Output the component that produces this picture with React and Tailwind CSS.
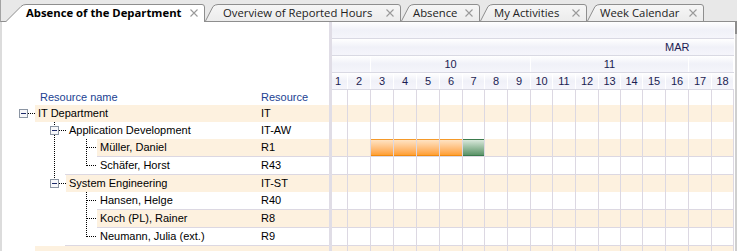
import React from "react";

// day column widths in the chart (px, right border included)
const DAYS = [16, 23, 23, 23, 23, 23, 22, 23, 23, 22, 23, 23, 22, 22, 23, 23, 23, 22];
const W = { 16: "w-[16px]", 22: "w-[22px]", 23: "w-[23px]" };

const WEEKS = [
  { w: "w-[39px]", label: "" },
  { w: "w-[160px]", label: "10" },
  { w: "w-[158px]", label: "11" },
  { w: "w-[45px]", label: "" },
];

const TABS = [
  { label: "Absence of the Department", w: 200, cls: "w-[200px]", s: 19, pl: "pl-[21px]", active: true },
  { label: "Overview of Reported Hours", w: 196, cls: "w-[196px]", s: 11, pl: "pl-[18px]" },
  { label: "Absence", w: 79, cls: "w-[79px]", s: 11, pl: "pl-[12px]" },
  { label: "My Activities", w: 107, cls: "w-[107px]", s: 11, pl: "pl-[14px]" },
  { label: "Week Calendar", w: 117, cls: "w-[117px]", s: 11, pl: "pl-[13px]" },
];

// tree rows; h = row height incl. bottom line
const ROWS = [
  { name: "IT Department", res: "IT", level: 0, band: true, h: 17, hc: "h-[17px]" },
  { name: "Application Development", res: "IT-AW", level: 1, h: 17, hc: "h-[17px]" },
  { name: "Müller, Daniel", res: "R1", level: 2, band: true, leaf: true, h: 18, hc: "h-[18px]", bar: true },
  { name: "Schäfer, Horst", res: "R43", level: 2, leaf: true, last: true, h: 18, hc: "h-[18px]" },
  { name: "System Engineering", res: "IT-ST", level: 1, band: true, h: 17, hc: "h-[17px]" },
  { name: "Hansen, Helge", res: "R40", level: 2, leaf: true, h: 18, hc: "h-[18px]" },
  { name: "Koch (PL), Rainer", res: "R8", level: 2, band: true, leaf: true, h: 18, hc: "h-[18px]" },
  { name: "Neumann, Julia (ext.)", res: "R9", level: 2, leaf: true, last: true, h: 18, hc: "h-[18px]" },
  { name: "", res: "", level: 0, band: true, h: 18, hc: "h-[18px]" },
];

const INDENT = ["w-[33px]", "w-[64px]", "w-[95px]"];
const INDENT_PX = [33, 64, 95];

const CloseX = () => (
  <svg width="8" height="8" viewBox="0 0 8 8" className="relative shrink-0">
    <path d="M0.5 0.5L7.5 7.5M7.5 0.5L0.5 7.5" stroke="#9a9a9a" strokeWidth="1.1" />
  </svg>
);

const Tab = ({ tab }) => {
  const h = tab.active ? 18 : 17;
  const d = `M0.5 ${h} L${tab.s - 3} 2.5 Q${tab.s - 1} 0.5 ${tab.s + 2} 0.5 H${tab.w - 3} Q${tab.w - 0.5} 0.5 ${tab.w - 0.5} 3 V${h}`;
  return (
    <div
      className={`relative ${tab.cls} ${tab.active ? "h-[18px] -mb-px z-10" : "h-[17px]"} ${tab.pl} pr-[7px] flex items-center shrink-0`}
    >
      <svg width={tab.w} height={h} className="absolute left-0 top-0">
        <defs>
          <linearGradient id="tabg" x1="0" y1="0" x2="0" y2="1">
            <stop offset="0" stopColor="#f6f6f6" />
            <stop offset="1" stopColor="#ececec" />
          </linearGradient>
        </defs>
        <path d={d} fill={tab.active ? "#ffffff" : "url(#tabg)"} stroke="#8e8e8e" strokeWidth="1" />
      </svg>
      <span
        className={`relative font-['Open_Sans',sans-serif] text-[11.3px] leading-none whitespace-nowrap ${
          tab.active ? "font-bold text-black" : "text-[#222]"
        }`}
      >
        {tab.label}
      </span>
      <div className="ml-auto flex">
        <CloseX />
      </div>
    </div>
  );
};

const MinusBox = ({ x }) => (
  <g>
    <rect x={x + 0.5} y="4.5" width="8" height="8" fill="#f7f7f9" stroke="#8b95a3" />
    <path d={`M${x + 2} 8.5H${x + 7}`} stroke="#1d2a6a" />
  </g>
);

// connector lines drawn per row (x in panel coords, panel starts at page x 2)
const Connector = ({ row, i }) => {
  const w = INDENT_PX[row.level];
  const h = row.h;
  const dot = { stroke: "#000", strokeDasharray: "1 1", strokeWidth: 1 };
  const parts = [];
  if (i === 0) {
    parts.push(<MinusBox key="b" x={17} />);
    parts.push(<path key="h" d="M26 8.5H33" {...dot} />);
    parts.push(<path key="v" d={`M52.5 13V${h}`} {...dot} />);
  }
  if (row.level === 1) {
    parts.push(<path key="vt" d="M52.5 0V4" {...dot} />);
    parts.push(<MinusBox key="b" x={48} />);
    parts.push(<path key="h" d="M57 8.5H64" {...dot} />);
    if (i === 1) parts.push(<path key="vb" d={`M52.5 13V${h}`} {...dot} />);
    parts.push(<path key="c" d={`M84.5 13V${h}`} {...dot} />);
  }
  if (row.level === 2) {
    if (i < 4) parts.push(<path key="p" d={`M52.5 0V${h}`} {...dot} />);
    parts.push(<path key="v" d={row.last ? "M84.5 0V9" : `M84.5 0V${h}`} {...dot} />);
    parts.push(<path key="h" d="M85 8.5H95" {...dot} />);
    if (row.last) parts.push(<path key="bl" d={`M63 ${h - 0.5}H95`} stroke="#dcd8e2" />);
  }
  return (
    <svg width={w} height={h} className={`${INDENT[row.level]} shrink-0`}>
      {parts}
    </svg>
  );
};

const GridCells = ({ bar }) => (
  <>
    {DAYS.map((w, d) => {
      const day = d + 1;
      let fill = null;
      if (bar && day >= 3 && day <= 6)
        fill = "border-t border-b border-t-[#f59a2a] border-b-[#f08a10] bg-gradient-to-b from-[#ffe3c2] to-[#ff9f2e]";
      if (bar && day === 7)
        fill = "border-t border-b border-t-[#3b7a4c] border-b-[#3b7a4c] bg-gradient-to-b from-[#d9e8db] to-[#5a9468]";
      return (
        <div key={d} className={`${W[w]} h-full border-r border-[#dcd8e2] shrink-0`}>
          {fill && <div className={`h-full ${fill}`} />}
        </div>
      );
    })}
  </>
);

const HeadRow = ({ children }) => (
  <div className="h-[17px] shrink-0 flex border-b border-[#d9d9e3] bg-gradient-to-b from-white via-[#f0f1f8] to-[#f5f5fb]">
    {children}
  </div>
);

export default function App() {
  return (
    <div className="w-[737px] h-[251px] overflow-hidden bg-white font-['Liberation_Sans',Arial,sans-serif] text-[11px] text-black flex flex-col">
      {/* tab strip */}
      <div className="h-[22px] shrink-0 flex items-end pl-[4px] bg-[#e8e8e8] border-b border-[#8e8e8e] border-l border-l-[#a3a3a3]">
        {TABS.map((t) => (
          <Tab key={t.label} tab={t} />
        ))}
      </div>

      <div className="flex flex-1 min-h-0">
        <div className="w-[2px] bg-[#dcdcdc] shrink-0" />

        {/* resource tree */}
        <div className="w-[327px] shrink-0 flex flex-col">
          <div className="h-[83px] shrink-0 flex items-end text-[#213f92]">
            <div className="h-[16px] flex items-center w-full">
              <span className="pl-[38px] flex-1">Resource name</span>
              <span className="w-[68px]">Resource</span>
            </div>
          </div>
          {ROWS.map((r, i) => (
            <div key={i} className={`${r.hc} flex shrink-0`}>
              <Connector row={r} i={i} />
              <div
                className={`flex-1 flex items-center ${r.band ? "bg-[#fdf1df]" : ""} ${
                  r.leaf ? "border-b border-[#dcd8e2]" : ""
                }`}
              >
                <span className="flex-1 pl-[3px] whitespace-nowrap">{r.name}</span>
                <span className="w-[68px]">{r.res}</span>
              </div>
            </div>
          ))}
        </div>

        {/* splitter */}
        <div className="w-[3px] bg-[#e0dde6] shrink-0" />

        {/* chart */}
        <div className="w-[402px] shrink-0 flex flex-col">
          <HeadRow />
          <HeadRow>
            <span className="pl-[333px] self-center text-[#1b1c52]">MAR</span>
          </HeadRow>
          <HeadRow>
            {WEEKS.map((wk, i) => (
              <div
                key={i}
                className={`${wk.w} shrink-0 flex items-center justify-center border-r border-white text-[#1b1c52]`}
              >
                {wk.label}
              </div>
            ))}
          </HeadRow>
          <HeadRow>
            {DAYS.map((w, d) => (
              <div
                key={d}
                className={`${W[w]} shrink-0 flex items-center border-r border-white text-[#1b1c52] ${
                  d === 0 ? "pl-[3px]" : "justify-center"
                }`}
              >
                {d + 1}
              </div>
            ))}
          </HeadRow>
          <div className="h-[15px] flex shrink-0">
            <GridCells />
          </div>
          {ROWS.map((r, i) => (
            <div
              key={i}
              className={`${r.hc} flex shrink-0 ${r.band ? "bg-[#fdf1df]" : ""} ${
                r.leaf ? "border-b border-[#dcd8e2]" : ""
              }`}
            >
              <GridCells bar={r.bar} />
            </div>
          ))}
        </div>

        <div className="w-[3px] shrink-0 flex flex-col border-l border-white">
          <div className="h-[12px] bg-[#8d8d8d]" />
          <div className="flex-1 bg-[#cfcfcf]" />
        </div>
      </div>
    </div>
  );
}
